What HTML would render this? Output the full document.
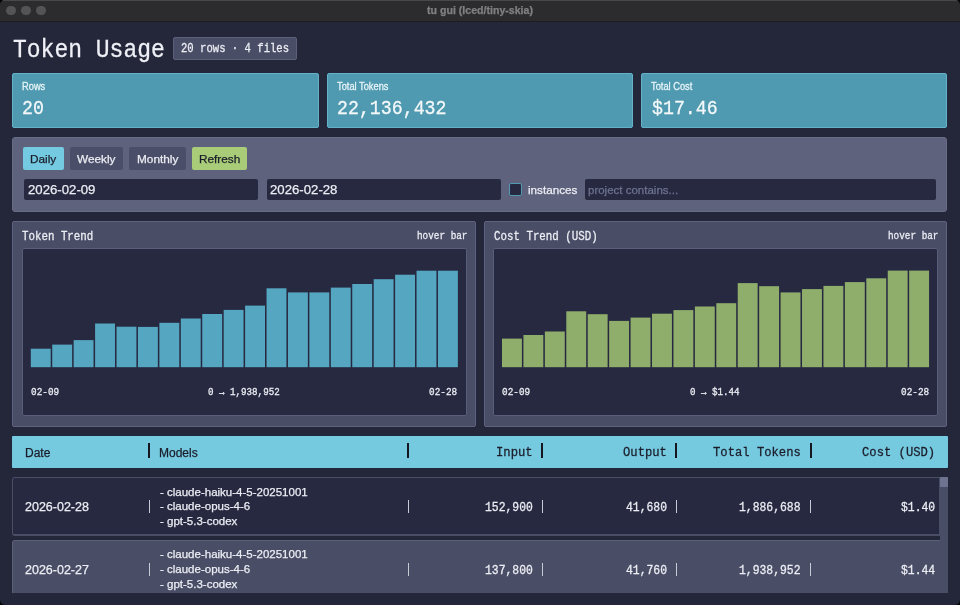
<!DOCTYPE html><html><head><meta charset="utf-8"><style>
html,body{margin:0;padding:0;background:#000;width:960px;height:605px;overflow:hidden}
#win{position:absolute;left:0;top:0;width:960px;height:605px;background:#24273a;border-radius:5px;overflow:hidden}
.b{position:absolute;box-sizing:border-box}
.t{position:absolute;white-space:pre;will-change:transform}
</style></head><body><div id="win">
<div class="b" style="left:0;top:0;width:960px;height:21px;background:#2c2c2e;border-top:1px solid #48484a"></div>
<div class="b" style="left:0;top:21px;width:960px;height:1px;background:#1c1d20"></div>
<div class="b" style="left:6.25px;top:5.75px;width:9.5px;height:9.5px;border-radius:50%;background:#545456"></div>
<div class="b" style="left:21.25px;top:5.75px;width:9.5px;height:9.5px;border-radius:50%;background:#545456"></div>
<div class="b" style="left:36.25px;top:5.75px;width:9.5px;height:9.5px;border-radius:50%;background:#545456"></div>
<div class="b" style="left:173px;top:37px;width:124px;height:23px;background:#4a4d66;border:1px solid #5b6078;border-radius:2px;"></div>
<div class="b" style="left:12px;top:72.5px;width:307px;height:55.0px;background:#4f9ab0;border:1px solid #62b2ca;border-radius:2px;"></div>
<div class="b" style="left:327px;top:72.5px;width:306px;height:55.0px;background:#4f9ab0;border:1px solid #62b2ca;border-radius:2px;"></div>
<div class="b" style="left:641px;top:72.5px;width:306px;height:55.0px;background:#4f9ab0;border:1px solid #62b2ca;border-radius:2px;"></div>
<div class="b" style="left:12px;top:136.5px;width:935px;height:75.5px;background:#5e627c;border:1px solid #686c87;border-radius:3px;"></div>
<div class="b" style="left:23px;top:147px;width:41px;height:23px;background:#74cae0;border-radius:2px;"></div>
<div class="b" style="left:70px;top:147px;width:53px;height:23px;background:#4b4e68;border-radius:2px;"></div>
<div class="b" style="left:129px;top:147px;width:57px;height:23px;background:#4b4e68;border-radius:2px;"></div>
<div class="b" style="left:192px;top:147px;width:55px;height:23px;background:#a8cc78;border-radius:2px;"></div>
<div class="b" style="left:24px;top:179px;width:234px;height:21px;background:#262940;border-radius:2px;"></div>
<div class="b" style="left:267px;top:179px;width:233.5px;height:21px;background:#262940;border-radius:2px;"></div>
<div class="b" style="left:509px;top:183px;width:13px;height:13px;background:#262940;border:1px solid #4f9ab0;border-radius:2px;border-width:1.5px;"></div>
<div class="b" style="left:585px;top:179px;width:351px;height:21px;background:#262940;border-radius:2px;"></div>
<div class="b" style="left:12px;top:220.5px;width:464px;height:206.0px;background:#4a4d66;border:1px solid #5e6280;border-radius:2px;"></div>
<div class="b" style="left:21.5px;top:248.2px;width:445.5px;height:168.3px;background:#262940;border:1px solid #5a5e7a;border-radius:2px;"></div>
<div class="b" style="left:484px;top:220.5px;width:463px;height:206.0px;background:#4a4d66;border:1px solid #5e6280;border-radius:2px;"></div>
<div class="b" style="left:493.0px;top:248.2px;width:445.0px;height:168.3px;background:#262940;border:1px solid #5a5e7a;border-radius:2px;"></div>
<div class="b" style="left:12px;top:435.5px;width:935.5px;height:32.5px;background:#76cae0;border-radius:1px;"></div>
<div class="b" style="left:148.25px;top:443px;width:2.0px;height:15px;background:#15161e;"></div>
<div class="b" style="left:407.25px;top:443px;width:2.0px;height:15px;background:#15161e;"></div>
<div class="b" style="left:541px;top:443px;width:2px;height:15px;background:#15161e;"></div>
<div class="b" style="left:675.25px;top:443px;width:2.0px;height:15px;background:#15161e;"></div>
<div class="b" style="left:809.5px;top:443px;width:2.0px;height:15px;background:#15161e;"></div>
<div class="b" style="left:12px;top:477px;width:928px;height:59px;background:#262940;border:1px solid #4a4d66;border-radius:3px;border-bottom-width:2px;border-top-right-radius:0;border-bottom-right-radius:0;"></div>
<div class="b" style="left:12px;top:540px;width:935.5px;height:53px;background:#4a4d66;border:1px solid #5b6078;border-radius:3px;border-bottom:none;border-bottom-left-radius:0;border-bottom-right-radius:0;"></div>
<div class="b" style="left:149.0px;top:500.2px;width:1.0px;height:13.000000000000057px;background:#c8cad6;"></div>
<div class="b" style="left:408.0px;top:500.2px;width:1.0px;height:13.000000000000057px;background:#c8cad6;"></div>
<div class="b" style="left:542.3px;top:500.2px;width:1.0px;height:13.000000000000057px;background:#c8cad6;"></div>
<div class="b" style="left:676.1px;top:500.2px;width:1.0px;height:13.000000000000057px;background:#c8cad6;"></div>
<div class="b" style="left:810.0px;top:500.2px;width:1.0px;height:13.000000000000057px;background:#c8cad6;"></div>
<div class="b" style="left:149.0px;top:562.8px;width:1.0px;height:13.0px;background:#c8cad6;"></div>
<div class="b" style="left:408.0px;top:562.8px;width:1.0px;height:13.0px;background:#c8cad6;"></div>
<div class="b" style="left:542.3px;top:562.8px;width:1.0px;height:13.0px;background:#c8cad6;"></div>
<div class="b" style="left:676.1px;top:562.8px;width:1.0px;height:13.0px;background:#c8cad6;"></div>
<div class="b" style="left:810.0px;top:562.8px;width:1.0px;height:13.0px;background:#c8cad6;"></div>
<div class="b" style="left:940px;top:477px;width:7.5px;height:116px;background:#4a4d66;"></div>
<div class="b" style="left:940px;top:477px;width:7.5px;height:10px;background:#6e7390;border-radius:1px;"></div>
<svg style="position:absolute;left:0;top:0" width="960" height="605"><rect x="30.80" y="348.70" width="19.9" height="18.50" fill="#55a6c0"/><rect x="52.23" y="344.60" width="19.9" height="22.60" fill="#55a6c0"/><rect x="73.66" y="340.10" width="19.9" height="27.10" fill="#55a6c0"/><rect x="95.09" y="323.50" width="19.9" height="43.70" fill="#55a6c0"/><rect x="116.52" y="326.70" width="19.9" height="40.50" fill="#55a6c0"/><rect x="137.95" y="326.90" width="19.9" height="40.30" fill="#55a6c0"/><rect x="159.38" y="322.80" width="19.9" height="44.40" fill="#55a6c0"/><rect x="180.81" y="318.50" width="19.9" height="48.70" fill="#55a6c0"/><rect x="202.24" y="314.00" width="19.9" height="53.20" fill="#55a6c0"/><rect x="223.67" y="309.90" width="19.9" height="57.30" fill="#55a6c0"/><rect x="245.10" y="305.60" width="19.9" height="61.60" fill="#55a6c0"/><rect x="266.53" y="288.30" width="19.9" height="78.90" fill="#55a6c0"/><rect x="287.96" y="292.40" width="19.9" height="74.80" fill="#55a6c0"/><rect x="309.39" y="292.40" width="19.9" height="74.80" fill="#55a6c0"/><rect x="330.82" y="287.60" width="19.9" height="79.60" fill="#55a6c0"/><rect x="352.25" y="284.00" width="19.9" height="83.20" fill="#55a6c0"/><rect x="373.68" y="279.20" width="19.9" height="88.00" fill="#55a6c0"/><rect x="395.11" y="274.70" width="19.9" height="92.50" fill="#55a6c0"/><rect x="416.54" y="270.70" width="19.9" height="96.50" fill="#55a6c0"/><rect x="437.97" y="270.70" width="19.9" height="96.50" fill="#55a6c0"/><rect x="502.00" y="338.60" width="19.9" height="28.60" fill="#8fae6c"/><rect x="523.43" y="335.00" width="19.9" height="32.20" fill="#8fae6c"/><rect x="544.86" y="331.50" width="19.9" height="35.70" fill="#8fae6c"/><rect x="566.29" y="311.30" width="19.9" height="55.90" fill="#8fae6c"/><rect x="587.72" y="314.20" width="19.9" height="53.00" fill="#8fae6c"/><rect x="609.15" y="320.90" width="19.9" height="46.30" fill="#8fae6c"/><rect x="630.58" y="317.60" width="19.9" height="49.60" fill="#8fae6c"/><rect x="652.01" y="313.70" width="19.9" height="53.50" fill="#8fae6c"/><rect x="673.44" y="310.10" width="19.9" height="57.10" fill="#8fae6c"/><rect x="694.87" y="306.50" width="19.9" height="60.70" fill="#8fae6c"/><rect x="716.30" y="303.20" width="19.9" height="64.00" fill="#8fae6c"/><rect x="737.73" y="283.10" width="19.9" height="84.10" fill="#8fae6c"/><rect x="759.16" y="286.20" width="19.9" height="81.00" fill="#8fae6c"/><rect x="780.59" y="292.40" width="19.9" height="74.80" fill="#8fae6c"/><rect x="802.02" y="289.10" width="19.9" height="78.10" fill="#8fae6c"/><rect x="823.45" y="285.90" width="19.9" height="81.30" fill="#8fae6c"/><rect x="844.88" y="282.10" width="19.9" height="85.10" fill="#8fae6c"/><rect x="866.31" y="278.30" width="19.9" height="88.90" fill="#8fae6c"/><rect x="887.74" y="270.60" width="19.9" height="96.60" fill="#8fae6c"/><rect x="909.17" y="270.60" width="19.9" height="96.60" fill="#8fae6c"/></svg>
<div class="t" style="left:427.29px;top:5.00px;font-family:'Liberation Sans';font-size:10.6px;line-height:10.6px;color:#808083;-webkit-text-stroke:0.25px #808083;font-weight:bold;">tu gui (Iced/tiny-skia)</div>
<div class="t" style="left:13.30px;top:39.60px;font-family:'Liberation Mono';font-size:23px;line-height:23px;color:#eef0f6;-webkit-text-stroke:0.25px #eef0f6;transform:scaleY(1.12);transform-origin:0 17px;">Token Usage</div>
<div class="t" style="left:180.80px;top:44.00px;font-family:'Liberation Mono';font-size:10.6px;line-height:10.6px;color:#eceef4;-webkit-text-stroke:0.25px #eceef4;transform:scaleY(1.12);transform-origin:0 8px;">20 rows · 4 files</div>
<div class="t" style="left:22.00px;top:83.30px;font-family:'Liberation Sans';font-size:9.3px;line-height:9.3px;color:#e8f4f8;-webkit-text-stroke:0.25px #e8f4f8;transform:scaleY(1.1);transform-origin:0 7px;">Rows</div>
<div class="t" style="left:21.50px;top:100.20px;font-family:'Liberation Mono';font-size:18.25px;line-height:18.25px;color:#f4f8fa;-webkit-text-stroke:0.25px #f4f8fa;transform:scaleY(1.12);transform-origin:0 14px;">20</div>
<div class="t" style="left:337.00px;top:83.30px;font-family:'Liberation Sans';font-size:9.3px;line-height:9.3px;color:#e8f4f8;-webkit-text-stroke:0.25px #e8f4f8;transform:scaleY(1.1);transform-origin:0 7px;">Total Tokens</div>
<div class="t" style="left:336.50px;top:100.20px;font-family:'Liberation Mono';font-size:18.25px;line-height:18.25px;color:#f4f8fa;-webkit-text-stroke:0.25px #f4f8fa;transform:scaleY(1.12);transform-origin:0 14px;">22,136,432</div>
<div class="t" style="left:651.00px;top:83.30px;font-family:'Liberation Sans';font-size:9.3px;line-height:9.3px;color:#e8f4f8;-webkit-text-stroke:0.25px #e8f4f8;transform:scaleY(1.1);transform-origin:0 7px;">Total Cost</div>
<div class="t" style="left:651.50px;top:100.20px;font-family:'Liberation Mono';font-size:18.25px;line-height:18.25px;color:#f4f8fa;-webkit-text-stroke:0.25px #f4f8fa;transform:scaleY(1.12);transform-origin:0 14px;">$17.46</div>
<div class="t" style="left:30.34px;top:154.20px;font-family:'Liberation Sans';font-size:11.8px;line-height:11.8px;color:#1b1d2a;-webkit-text-stroke:0.25px #1b1d2a;">Daily</div>
<div class="t" style="left:77.22px;top:154.20px;font-family:'Liberation Sans';font-size:11.8px;line-height:11.8px;color:#eceef4;-webkit-text-stroke:0.25px #eceef4;">Weekly</div>
<div class="t" style="left:136.80px;top:154.20px;font-family:'Liberation Sans';font-size:11.8px;line-height:11.8px;color:#eceef4;-webkit-text-stroke:0.25px #eceef4;">Monthly</div>
<div class="t" style="left:199.13px;top:154.20px;font-family:'Liberation Sans';font-size:11.8px;line-height:11.8px;color:#1b1d2a;-webkit-text-stroke:0.25px #1b1d2a;">Refresh</div>
<div class="t" style="left:27.50px;top:183.00px;font-family:'Liberation Sans';font-size:13.2px;line-height:13.2px;color:#eceef4;-webkit-text-stroke:0.25px #eceef4;">2026-02-09</div>
<div class="t" style="left:270.30px;top:183.00px;font-family:'Liberation Sans';font-size:13.2px;line-height:13.2px;color:#eceef4;-webkit-text-stroke:0.25px #eceef4;">2026-02-28</div>
<div class="t" style="left:527.80px;top:183.80px;font-family:'Liberation Sans';font-size:11.7px;line-height:11.7px;color:#eceef4;-webkit-text-stroke:0.25px #eceef4;">instances</div>
<div class="t" style="left:587.80px;top:184.50px;font-family:'Liberation Sans';font-size:11.5px;line-height:11.5px;color:#6e7390;-webkit-text-stroke:0.25px #6e7390;">project contains...</div>
<div class="t" style="left:22.00px;top:231.80px;font-family:'Liberation Mono';font-size:10.8px;line-height:10.8px;color:#eceef4;-webkit-text-stroke:0.25px #eceef4;transform:scaleY(1.12);transform-origin:0 8px;">Token Trend</div>
<div class="t" style="left:416.64px;top:232.10px;font-family:'Liberation Mono';font-size:9.35px;line-height:9.35px;color:#eceef4;-webkit-text-stroke:0.25px #eceef4;transform:scaleY(1.12);transform-origin:0 7px;">hover bar</div>
<div class="t" style="left:30.80px;top:387.70px;font-family:'Liberation Mono';font-size:9.4px;line-height:9.4px;color:#eceef4;-webkit-text-stroke:0.25px #eceef4;transform:scaleY(1.12);transform-origin:0 7px;">02-09</div>
<div class="t" style="left:429.37px;top:387.70px;font-family:'Liberation Mono';font-size:9.4px;line-height:9.4px;color:#eceef4;-webkit-text-stroke:0.25px #eceef4;transform:scaleY(1.12);transform-origin:0 7px;">02-28</div>
<div class="t" style="left:208.42px;top:387.70px;font-family:'Liberation Mono';font-size:9.2px;line-height:9.2px;color:#eceef4;-webkit-text-stroke:0.25px #eceef4;transform:scaleY(1.12);transform-origin:0 7px;">0 → 1,938,952</div>
<div class="t" style="left:494.00px;top:231.80px;font-family:'Liberation Mono';font-size:10.8px;line-height:10.8px;color:#eceef4;-webkit-text-stroke:0.25px #eceef4;transform:scaleY(1.12);transform-origin:0 8px;">Cost Trend (USD)</div>
<div class="t" style="left:887.64px;top:232.10px;font-family:'Liberation Mono';font-size:9.35px;line-height:9.35px;color:#eceef4;-webkit-text-stroke:0.25px #eceef4;transform:scaleY(1.12);transform-origin:0 7px;">hover bar</div>
<div class="t" style="left:502.00px;top:387.70px;font-family:'Liberation Mono';font-size:9.4px;line-height:9.4px;color:#eceef4;-webkit-text-stroke:0.25px #eceef4;transform:scaleY(1.12);transform-origin:0 7px;">02-09</div>
<div class="t" style="left:900.57px;top:387.70px;font-family:'Liberation Mono';font-size:9.4px;line-height:9.4px;color:#eceef4;-webkit-text-stroke:0.25px #eceef4;transform:scaleY(1.12);transform-origin:0 7px;">02-28</div>
<div class="t" style="left:690.20px;top:387.70px;font-family:'Liberation Mono';font-size:9.2px;line-height:9.2px;color:#eceef4;-webkit-text-stroke:0.25px #eceef4;transform:scaleY(1.12);transform-origin:0 7px;">0 → $1.44</div>
<div class="t" style="left:25.00px;top:446.50px;font-family:'Liberation Sans';font-size:12px;line-height:12px;color:#1b1d2a;-webkit-text-stroke:0.25px #1b1d2a;">Date</div>
<div class="t" style="left:159.00px;top:446.50px;font-family:'Liberation Sans';font-size:12px;line-height:12px;color:#1b1d2a;-webkit-text-stroke:0.25px #1b1d2a;">Models</div>
<div class="t" style="left:495.75px;top:447.30px;font-family:'Liberation Mono';font-size:12.2px;line-height:12.2px;color:#1b1d2a;-webkit-text-stroke:0.25px #1b1d2a;transform:scaleY(1.12);transform-origin:0 9px;">Input</div>
<div class="t" style="left:622.73px;top:447.30px;font-family:'Liberation Mono';font-size:12.2px;line-height:12.2px;color:#1b1d2a;-webkit-text-stroke:0.25px #1b1d2a;transform:scaleY(1.12);transform-origin:0 9px;">Output</div>
<div class="t" style="left:712.55px;top:447.30px;font-family:'Liberation Mono';font-size:12.2px;line-height:12.2px;color:#1b1d2a;-webkit-text-stroke:0.25px #1b1d2a;transform:scaleY(1.12);transform-origin:0 9px;">Total Tokens</div>
<div class="t" style="left:862.18px;top:447.30px;font-family:'Liberation Mono';font-size:12.2px;line-height:12.2px;color:#1b1d2a;-webkit-text-stroke:0.25px #1b1d2a;transform:scaleY(1.12);transform-origin:0 9px;">Cost (USD)</div>
<div class="t" style="left:25.00px;top:501.20px;font-family:'Liberation Sans';font-size:12.5px;line-height:12.5px;color:#eceef4;-webkit-text-stroke:0.25px #eceef4;">2026-02-28</div>
<div class="t" style="left:159.50px;top:486.50px;font-family:'Liberation Sans';font-size:11.5px;line-height:11.5px;color:#eceef4;-webkit-text-stroke:0.25px #eceef4;">- claude-haiku-4-5-20251001</div>
<div class="t" style="left:159.50px;top:501.25px;font-family:'Liberation Sans';font-size:11.5px;line-height:11.5px;color:#eceef4;-webkit-text-stroke:0.25px #eceef4;">- claude-opus-4-6</div>
<div class="t" style="left:159.50px;top:516.00px;font-family:'Liberation Sans';font-size:11.5px;line-height:11.5px;color:#eceef4;-webkit-text-stroke:0.25px #eceef4;">- gpt-5.3-codex</div>
<div class="t" style="left:484.79px;top:503.20px;font-family:'Liberation Mono';font-size:11.4px;line-height:11.4px;color:#eceef4;-webkit-text-stroke:0.25px #eceef4;transform:scaleY(1.12);transform-origin:0 8px;">152,900</div>
<div class="t" style="left:626.02px;top:503.20px;font-family:'Liberation Mono';font-size:11.4px;line-height:11.4px;color:#eceef4;-webkit-text-stroke:0.25px #eceef4;transform:scaleY(1.12);transform-origin:0 8px;">41,680</div>
<div class="t" style="left:738.92px;top:503.20px;font-family:'Liberation Mono';font-size:11.4px;line-height:11.4px;color:#eceef4;-webkit-text-stroke:0.25px #eceef4;transform:scaleY(1.12);transform-origin:0 8px;">1,886,688</div>
<div class="t" style="left:900.66px;top:503.20px;font-family:'Liberation Mono';font-size:11.4px;line-height:11.4px;color:#eceef4;-webkit-text-stroke:0.25px #eceef4;transform:scaleY(1.12);transform-origin:0 8px;">$1.40</div>
<div class="t" style="left:25.00px;top:563.80px;font-family:'Liberation Sans';font-size:12.5px;line-height:12.5px;color:#eceef4;-webkit-text-stroke:0.25px #eceef4;">2026-02-27</div>
<div class="t" style="left:159.50px;top:549.30px;font-family:'Liberation Sans';font-size:11.5px;line-height:11.5px;color:#eceef4;-webkit-text-stroke:0.25px #eceef4;">- claude-haiku-4-5-20251001</div>
<div class="t" style="left:159.50px;top:564.05px;font-family:'Liberation Sans';font-size:11.5px;line-height:11.5px;color:#eceef4;-webkit-text-stroke:0.25px #eceef4;">- claude-opus-4-6</div>
<div class="t" style="left:159.50px;top:578.80px;font-family:'Liberation Sans';font-size:11.5px;line-height:11.5px;color:#eceef4;-webkit-text-stroke:0.25px #eceef4;">- gpt-5.3-codex</div>
<div class="t" style="left:484.79px;top:565.80px;font-family:'Liberation Mono';font-size:11.4px;line-height:11.4px;color:#eceef4;-webkit-text-stroke:0.25px #eceef4;transform:scaleY(1.12);transform-origin:0 8px;">137,800</div>
<div class="t" style="left:626.02px;top:565.80px;font-family:'Liberation Mono';font-size:11.4px;line-height:11.4px;color:#eceef4;-webkit-text-stroke:0.25px #eceef4;transform:scaleY(1.12);transform-origin:0 8px;">41,760</div>
<div class="t" style="left:738.92px;top:565.80px;font-family:'Liberation Mono';font-size:11.4px;line-height:11.4px;color:#eceef4;-webkit-text-stroke:0.25px #eceef4;transform:scaleY(1.12);transform-origin:0 8px;">1,938,952</div>
<div class="t" style="left:900.66px;top:565.80px;font-family:'Liberation Mono';font-size:11.4px;line-height:11.4px;color:#eceef4;-webkit-text-stroke:0.25px #eceef4;transform:scaleY(1.12);transform-origin:0 8px;">$1.44</div>
</div></body></html>
